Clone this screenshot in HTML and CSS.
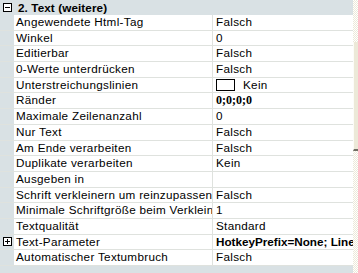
FILE: index.html
```html
<!DOCTYPE html>
<html lang="de">
<head>
    <meta charset="UTF-8">
    <title>Eigenschaften - Text (weitere)</title>
    <link rel="stylesheet" href="styles.css">
</head>
<body>
    <div class="panel">
        <div class="grid">
            <div class="group">
                <svg class="toggle" width="9" height="9" viewBox="0 0 9 9"><rect x="0.5" y="0.5" width="8" height="8" fill="#fff" stroke="#000"/><path d="M2 4.5h5" stroke="#000"/></svg>
                <span class="group-title">2. Text (weitere)</span>
            </div>
            <div class="row"><span class="gutter"></span><span class="name">Angewendete Html-Tag</span><span class="value">Falsch</span></div>
            <div class="row"><span class="gutter"></span><span class="name">Winkel</span><span class="value">0</span></div>
            <div class="row"><span class="gutter"></span><span class="name">Editierbar</span><span class="value">Falsch</span></div>
            <div class="row"><span class="gutter"></span><span class="name">0-Werte unterdrücken</span><span class="value">Falsch</span></div>
            <div class="row"><span class="gutter"></span><span class="name">Unterstreichungslinien</span><span class="value"><span class="swatch"></span>Kein</span></div>
            <div class="row"><span class="gutter"></span><span class="name">Ränder</span><span class="value serif">0;0;0;0</span></div>
            <div class="row"><span class="gutter"></span><span class="name">Maximale Zeilenanzahl</span><span class="value">0</span></div>
            <div class="row"><span class="gutter"></span><span class="name">Nur Text</span><span class="value">Falsch</span></div>
            <div class="row"><span class="gutter"></span><span class="name">Am Ende verarbeiten</span><span class="value">Falsch</span></div>
            <div class="row"><span class="gutter"></span><span class="name">Duplikate verarbeiten</span><span class="value">Kein</span></div>
            <div class="row"><span class="gutter"></span><span class="name">Ausgeben in</span><span class="value"></span></div>
            <div class="row"><span class="gutter"></span><span class="name">Schrift verkleinern um reinzupassen</span><span class="value">Falsch</span></div>
            <div class="row"><span class="gutter"></span><span class="name">Minimale Schriftgröße beim Verkleinern</span><span class="value">1</span></div>
            <div class="row"><span class="gutter"></span><span class="name">Textqualität</span><span class="value">Standard</span></div>
            <div class="row"><span class="gutter"><svg class="toggle" width="9" height="9" viewBox="0 0 9 9"><rect x="0.5" y="0.5" width="8" height="8" fill="#fff" stroke="#000"/><path d="M2 4.5h5M4.5 2v5" stroke="#000"/></svg></span><span class="name">Text-Parameter</span><span class="value bold">HotkeyPrefix=None; LineLimit=False</span></div>
            <div class="row"><span class="gutter"></span><span class="name">Automatischer Textumbruch</span><span class="value">Falsch</span></div>
        </div>
        <div class="scrollbar">
            <div class="thumb"></div>
        </div>
    </div>
</body>
</html>
```

FILE: styles.css
```css
body { margin: 0; font-family: 'Liberation Sans', Arial, sans-serif; font-size: 11.7px; letter-spacing: 0.3px; color: #000; background-color: #d9e1e4; }
.panel { display: flex; width: 358px; height: 273px; overflow: hidden; background-color: #d9e1e4; }
.grid { width: 353px; flex: none; }
.group { display: flex; align-items: center; height: 15px; background-color: #d9e1e4; }
.group .toggle { margin-left: 3px; }
.group-title { font-weight: bold; margin-left: 6px; letter-spacing: 0.1px; }
.toggle { display: block; flex: none; }
.row { display: flex; height: 14.7px; border-bottom: 1px solid #dfe2de; background-color: #fff; line-height: 14.7px; }
.gutter { width: 14px; flex: none; display: flex; align-items: center; background-color: #d9e1e4; }
.gutter .toggle { margin-left: 3px; }
.name { width: 196px; flex: none; padding-left: 2px; border-right: 1px solid #dfe2de; white-space: nowrap; overflow: hidden; }
.value { flex: 1; padding-left: 3px; white-space: nowrap; overflow: hidden; display: flex; align-items: center; }
.value.serif { font-family: 'Liberation Serif', 'Times New Roman', serif; font-weight: bold; font-size: 12px; letter-spacing: 0; }
.value.bold { font-weight: bold; letter-spacing: 0; }
.swatch { display: inline-block; flex: none; width: 17px; height: 10px; border: 1px solid #000; margin-right: 8px; }
.scrollbar { width: 5px; flex: none; background-color: #fff; background-image: repeating-conic-gradient(#ece9d8 0 25%, #fff 0 50%); background-size: 2px 2px; padding-top: 42px; }
.thumb { height: 107px; background-color: #ece9d8; border-left: 1px solid #fdfcf8; border-bottom: 2px solid #716f64; }
```
